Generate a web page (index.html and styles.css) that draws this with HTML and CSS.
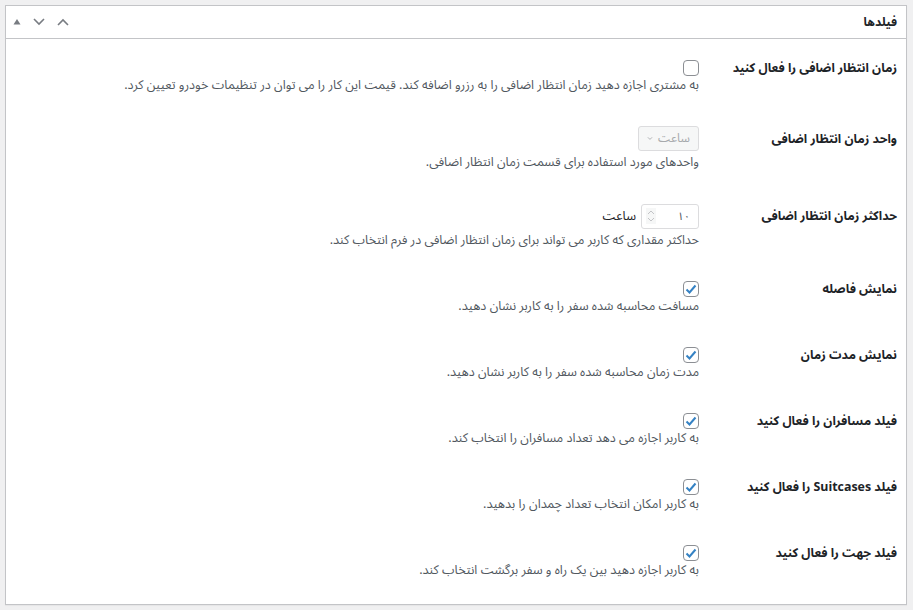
FILE: index.html
```html
<!DOCTYPE html>
<html lang="fa" dir="rtl">
<head>
<meta charset="utf-8">
<title>فیلدها</title>
<link rel="stylesheet" href="styles.css">
</head>
<body>
<div class="postbox">
  <div class="postbox-header">
    <h2 class="hndle">فیلدها</h2>
    <div class="handle-actions">
      <span class="handle-btn">
        <svg width="14" height="10" viewBox="0 0 14 10"><path d="M2 8 L7 3 L12 8" fill="none" stroke="#787c82" stroke-width="1.6"/></svg>
      </span>
      <span class="handle-btn">
        <svg width="14" height="10" viewBox="0 0 14 10"><path d="M2 2 L7 7 L12 2" fill="none" stroke="#787c82" stroke-width="1.6"/></svg>
      </span>
      <span class="handle-btn small">
        <svg width="8" height="8" viewBox="0 0 8 8"><path d="M0.5 6.5 L4 1 L7.5 6.5 Z" fill="#787c82"/></svg>
      </span>
    </div>
  </div>
  <div class="inside">
    <div class="form-row">
      <div class="label">زمان انتظار اضافی را فعال کنید</div>
      <div class="control"><span class="cb"></span></div>
      <p class="description">به مشتری اجازه دهید زمان انتظار اضافی را به رزرو اضافه کند. قیمت این کار را می توان در تنظیمات خودرو تعیین کرد.</p>
    </div>
    <div class="form-row">
      <div class="label">واحد زمان انتظار اضافی</div>
      <div class="control">
        <span class="select">ساعت
          <svg width="10" height="7" viewBox="0 0 10 7"><path d="M1.5 1.5 L5 5 L8.5 1.5" fill="none" stroke="#a7aaad" stroke-width="1.5"/></svg>
        </span>
      </div>
      <p class="description spaced">واحدهای مورد استفاده برای قسمت زمان انتظار اضافی.</p>
    </div>
    <div class="form-row">
      <div class="label">حداکثر زمان انتظار اضافی</div>
      <div class="control">
        <span class="numbox"><span class="num">۱۰</span>
          <svg class="spin" width="10" height="16" viewBox="0 0 10 16"><path d="M2 6 L5 3 L8 6 M2 10 L5 13 L8 10" fill="none" stroke="#c3c4c7" stroke-width="1"/></svg>
        </span>
        <span class="unit">ساعت</span>
      </div>
      <p class="description spaced">حداکثر مقداری که کاربر می تواند برای زمان انتظار اضافی در فرم انتخاب کند.</p>
    </div>
    <div class="form-row">
      <div class="label">نمایش فاصله</div>
      <div class="control"><span class="cb checked"><svg width="14" height="14" viewBox="0 0 14 14"><path d="M2.5 7.5 L5.5 10.5 L11.5 3.5" fill="none" stroke="#3582c4" stroke-width="2"/></svg></span></div>
      <p class="description">مسافت محاسبه شده سفر را به کاربر نشان دهید.</p>
    </div>
    <div class="form-row">
      <div class="label">نمایش مدت زمان</div>
      <div class="control"><span class="cb checked"><svg width="14" height="14" viewBox="0 0 14 14"><path d="M2.5 7.5 L5.5 10.5 L11.5 3.5" fill="none" stroke="#3582c4" stroke-width="2"/></svg></span></div>
      <p class="description">مدت زمان محاسبه شده سفر را به کاربر نشان دهید.</p>
    </div>
    <div class="form-row">
      <div class="label">فیلد مسافران را فعال کنید</div>
      <div class="control"><span class="cb checked"><svg width="14" height="14" viewBox="0 0 14 14"><path d="M2.5 7.5 L5.5 10.5 L11.5 3.5" fill="none" stroke="#3582c4" stroke-width="2"/></svg></span></div>
      <p class="description">به کاربر اجازه می دهد تعداد مسافران را انتخاب کند.</p>
    </div>
    <div class="form-row">
      <div class="label">فیلد Suitcases را فعال کنید</div>
      <div class="control"><span class="cb checked"><svg width="14" height="14" viewBox="0 0 14 14"><path d="M2.5 7.5 L5.5 10.5 L11.5 3.5" fill="none" stroke="#3582c4" stroke-width="2"/></svg></span></div>
      <p class="description">به کاربر امکان انتخاب تعداد چمدان را بدهید.</p>
    </div>
    <div class="form-row">
      <div class="label">فیلد جهت را فعال کنید</div>
      <div class="control"><span class="cb checked"><svg width="14" height="14" viewBox="0 0 14 14"><path d="M2.5 7.5 L5.5 10.5 L11.5 3.5" fill="none" stroke="#3582c4" stroke-width="2"/></svg></span></div>
      <p class="description">به کاربر اجازه دهید بین یک راه و سفر برگشت انتخاب کند.</p>
    </div>
  </div>
</div>
</body>
</html>
```
FILE: styles.css
```css
html, body {
  margin: 0;
  padding: 0;
}
body {
  background: #f0f0f1;
  font-family: "Noto Sans Arabic", "DejaVu Sans", sans-serif;
  color: #3c434a;
  padding: 5px 6px 5px 5px;
}
.postbox {
  background: #fff;
  border: 1px solid #c3c4c7;
  box-shadow: 0 1px 1px rgba(0,0,0,.04);
  height: 600px;
  box-sizing: border-box;
}
.postbox-header {
  height: 32px;
  border-bottom: 1px solid #c3c4c7;
  display: flex;
  align-items: center;
  justify-content: space-between;
  padding: 0 9px 0 6px;
}
.hndle {
  margin: 0;
  font-size: 12px;
  font-weight: bold;
  color: #1d2327;
}
.handle-actions {
  display: flex;
  align-items: center;
  gap: 10px;
}
.handle-btn {
  display: flex;
  align-items: center;
  justify-content: center;
  width: 14px;
  height: 14px;
}
.handle-btn.small {
  width: 10px;
}
.inside {
  padding: 5px 9px 0 12px;
}
.form-row {
  display: grid;
  grid-template-columns: 198px 1fr;
  grid-template-areas: "label control" ". desc";
  padding: 16px 0 15px;
}
.label {
  grid-area: label;
  align-self: center;
  font-size: 12.4px;
  font-weight: bold;
  color: #1d2327;
  line-height: 16px;
  white-space: nowrap;
}
.control {
  grid-area: control;
  display: flex;
  align-items: center;
  gap: 5px;
}
.description {
  grid-area: desc;
  margin: 0;
  font-size: 12.6px;
  line-height: 19px;
  color: #50575e;
}
.description.spaced {
  margin-top: 2px;
}
.cb {
  width: 16px;
  height: 16px;
  box-sizing: border-box;
  border: 1px solid #8c8f94;
  border-radius: 4px;
  background: #fff;
  display: flex;
  align-items: center;
  justify-content: center;
}
.select {
  display: flex;
  align-items: center;
  gap: 5px;
  height: 25px;
  width: 61px;
  box-sizing: border-box;
  padding: 0 8px;
  border: 1px solid #dcdcde;
  border-radius: 3px;
  background: #f6f7f7;
  color: #a7aaad;
  font-size: 12px;
}
.numbox {
  display: flex;
  align-items: center;
  justify-content: space-between;
  height: 25px;
  width: 58px;
  box-sizing: border-box;
  padding: 0 8px 0 4px;
  border: 1px solid #dcdcde;
  border-radius: 3px;
  background: #fff;
  font-size: 11px;
  color: #50575e;
}
.spin {
  background: #f6f7f7;
}
.unit {
  font-size: 12.5px;
  color: #1d2327;
}
```
